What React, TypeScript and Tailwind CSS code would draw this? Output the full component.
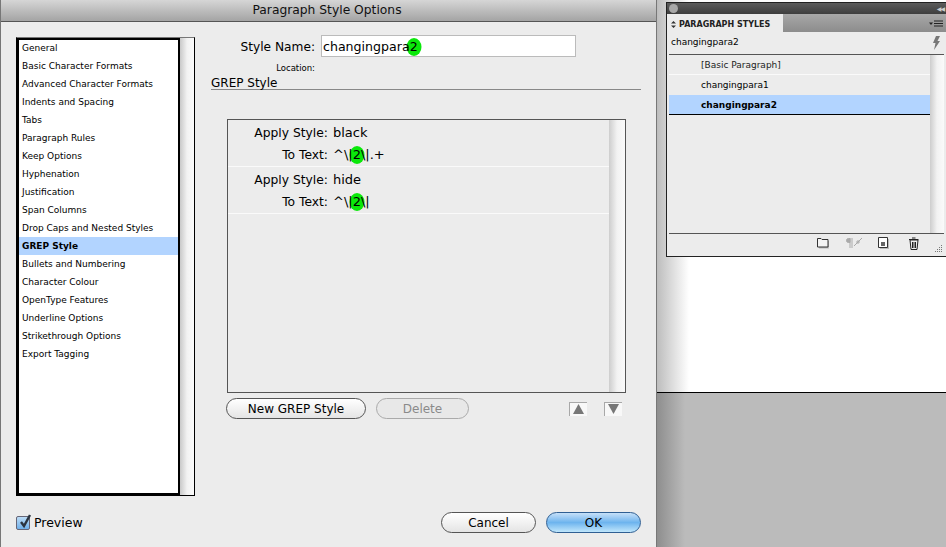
import React from 'react';

const categories = [
  'General',
  'Basic Character Formats',
  'Advanced Character Formats',
  'Indents and Spacing',
  'Tabs',
  'Paragraph Rules',
  'Keep Options',
  'Hyphenation',
  'Justification',
  'Span Columns',
  'Drop Caps and Nested Styles',
  'GREP Style',
  'Bullets and Numbering',
  'Character Colour',
  'OpenType Features',
  'Underline Options',
  'Strikethrough Options',
  'Export Tagging',
];

const Two: React.FC = () => (
  <span className="relative inline-block">
    <span className="absolute left-1/2 top-1/2 -z-10 h-[18px] w-[15px] -translate-x-1/2 -translate-y-1/2 rounded-[50%] bg-[#0ae80a]" />
    2
  </span>
);

const GrepRule: React.FC<{ style: string; tail?: string }> = ({ style, tail }) => (
  <div className="h-[47px] border-b border-[#fafafa] pt-[2px] text-[12.3px] leading-[22px]">
    <div className="flex">
      <span className="w-[100px] text-right">Apply Style:</span>
      <span className="ml-[5px] text-[13px]">{style}</span>
    </div>
    <div className="flex">
      <span className="w-[100px] text-right">To Text:</span>
      <span className="isolate ml-[5px] text-[13px]">
        ^\|<Two />\|{tail}
      </span>
    </div>
  </div>
);

const Pill: React.FC<{ label: string; className: string }> = ({ label, className }) => (
  <button className={`flex h-[21px] items-center justify-center rounded-full border text-[12px] ${className}`}>
    {label}
  </button>
);

const ArrowButton: React.FC<{ down?: boolean }> = ({ down }) => (
  <div className="flex h-[14px] w-[18px] items-center justify-center border-l border-t border-[#a8a8a8] bg-[#f8f8f8]">
    <svg width="11" height="10" viewBox="0 0 11 10">
      <path d={down ? 'M0 0h11L5.5 10z' : 'M5.5 0L11 10H0z'} fill="#777" />
    </svg>
  </div>
);

const CategoryList: React.FC = () => (
  <div className="flex h-[459px] w-[179px] border border-black border-t-[#777] bg-[#f4f4f4]">
    <div className="w-[163px] border-[2px] border-black bg-white">
      <div className="-mt-px">
        {categories.map((c) => (
          <div
            key={c}
            className={`h-[18px] pl-[3px] text-[9px] leading-[18px] ${c === 'GREP Style' ? 'bg-[#b2d4ff] font-bold' : ''}`}
          >
            {c}
          </div>
        ))}
      </div>
    </div>
    <div className="flex-1 bg-gradient-to-r from-[#c9c9c9] via-[#f2f2f2] to-[#fbfbfb]" />
  </div>
);

const Dialog: React.FC = () => (
  <div className="flex w-[657px] flex-col border-l border-r border-[#777] bg-[#ececec]">
    <div className="flex h-[22px] items-center justify-center border-b border-[#555] bg-gradient-to-b from-[#d6d6d6] to-[#a4a4a4] pr-[3px] text-[12.3px] text-[#111]">
      Paragraph Style Options
    </div>
    <div className="flex flex-1">
      <div className="ml-[15px] mt-[15px] flex w-[179px] flex-col">
        <CategoryList />
        <label className="mt-[18px] flex items-center gap-[3px] text-[12.5px]">
          <span className="relative flex h-[14px] w-[14px] items-center justify-center rounded-[2px] border border-[#667] bg-gradient-to-b from-[#bcdcf6] to-[#6fb0ea]">
            <svg className="absolute -top-[3px] left-[1px]" width="15" height="15" viewBox="0 0 15 15">
              <path d="M3 8l3 4 6-11" fill="none" stroke="#2b3440" strokeWidth="2.4" />
            </svg>
          </span>
          <span className="ml-[1px]">Preview</span>
        </label>
      </div>
      <div className="ml-[16px] flex w-[430px] flex-col">
        <div className="mt-[13px] flex items-center">
          <span className="w-[104px] pt-[2px] text-right text-[12.2px]">Style Name:</span>
          <div className="ml-[6px] h-[22px] w-[255px] border border-[#bbb] bg-white pl-[1px] text-[12.6px] leading-[21px]">
            <span className="isolate">
              changingpara
              <Two />
            </span>
          </div>
        </div>
        <div className="mt-[5px] w-[104px] text-right text-[8.5px] leading-[12px]">Location:</div>
        <div className="h-[16px] border-b border-[#888] pt-[1px] text-[12px] leading-[16px]">GREP Style</div>
        <div className="ml-[16px] mt-[29px] flex h-[274px] w-[399px] border border-[#555]">
          <div className="flex-1">
            <GrepRule style="black" tail=".+" />
            <GrepRule style="hide" />
          </div>
          <div className="w-[16px] bg-gradient-to-r from-[#cdcdcd] via-[#f2f2f2] to-[#fafafa]" />
        </div>
        <div className="ml-[15px] mt-[5px] flex items-center">
          <Pill
            label="New GREP Style"
            className="w-[140px] border-[#555] bg-gradient-to-b from-white via-[#f2f2f2] to-[#e4e4e4] text-black"
          />
          <Pill label="Delete" className="ml-[10px] w-[93px] border-[#aaa] bg-[#e8e8e8] text-[#8a8a8a]" />
          <div className="ml-auto mr-[19px] flex gap-[17px]">
            <ArrowButton />
            <ArrowButton down />
          </div>
        </div>
        <div className="mt-[93px] flex justify-end gap-[10px]">
          <Pill
            label="Cancel"
            className="w-[95px] border-[#555] bg-gradient-to-b from-white via-[#f2f2f2] to-[#e4e4e4] text-black"
          />
          <Pill
            label="OK"
            className="w-[95px] border-[#2f5f93] bg-gradient-to-b from-[#c6e0f8] via-[#6db4ee] to-[#bfe6fb] text-black"
          />
        </div>
      </div>
    </div>
  </div>
);

const StylesPanel: React.FC = () => (
  <div className="ml-[9px] mt-[2px] flex h-[255px] flex-col border-b border-l border-t border-[#222] bg-[#ececec]">
    <div className="flex h-[11px] items-center justify-between bg-gradient-to-b from-[#5c5c5c] to-[#3e3e3e] pl-[2px] pr-[2px]">
      <span className="h-[9px] w-[9px] rounded-full bg-[#a8a8a8]" />
      <span className="text-[6px] leading-none tracking-[-1px] text-[#ccc]">◀◀</span>
    </div>
    <div className="flex h-[18px] bg-gradient-to-b from-[#a8a8a8] to-[#8c8c8c]">
      <div className="flex w-[116px] items-center gap-[3px] bg-[#ececec] pl-[4px] pt-[3px] text-[8px] font-bold text-[#222]">
        <svg width="5" height="7" viewBox="0 0 5 7">
          <path d="M2.5 0L5 2.6H0zM2.5 7L0 4.4h5z" fill="#333" />
        </svg>
        PARAGRAPH STYLES
      </div>
      <div className="ml-auto flex items-center pr-[3px] pt-[2px]">
        <svg width="14" height="8" viewBox="0 0 14 8">
          <path d="M0 2.5h4L2 5z" fill="#222" />
          <path d="M5 1h9M5 3.5h9M5 6h9" stroke="#222" strokeWidth="1" />
        </svg>
      </div>
    </div>
    <div className="mx-[2px] flex h-[23px] items-center justify-between border-b border-[#555] pl-[2px] pr-[4px] text-[9px]">
      changingpara2
      <svg width="8" height="14" viewBox="0 0 8 14">
        <path d="M4 0h4L5.5 5H8L2 14l1.5-7H1z" fill="#777" />
      </svg>
    </div>
    <div className="mx-[2px] flex flex-1 border-b border-[#555]">
      <div className="flex-1 text-[9px]">
        <div className="h-[20px] border-b border-[#fafafa] pl-[32px] leading-[20px] text-[#222]">[Basic Paragraph]</div>
        <div className="h-[20px] pl-[32px] leading-[20px]">changingpara1</div>
        <div className="h-[20px] border-b border-black bg-[#b2d4ff] pl-[32px] font-bold leading-[20px]">changingpara2</div>
      </div>
      <div className="w-[14px] bg-gradient-to-r from-[#cdcdcd] via-[#f2f2f2] to-[#fafafa]" />
    </div>
    <div className="flex h-[22px] items-center justify-end pb-[4px] pr-[3px]">
      {/* footer icons: folder, style options, new style, trash, grip */}
      <svg width="13" height="12" viewBox="0 0 13 12">
        <path d="M2 4h10v7.5H2z" fill="#bbb" />
        <path d="M.5 1.5h3.5l1 1h6v7.5H.5z" fill="#f4f4f4" stroke="#333" />
      </svg>
      <svg className="ml-[15px]" width="18" height="12" viewBox="0 0 18 12">
        <path d="M5 1.5h-1.5a2 2 0 000 4H5zM5 1v10M7 1v10" stroke="#aaa" fill="#aaa" />
        <path d="M9 9l8-8M11 5h4M13 3v4" stroke="#aaa" />
      </svg>
      <svg className="ml-[15px]" width="11" height="12" viewBox="0 0 11 12">
        <path d="M2 2h9v10H2z" fill="#bbb" />
        <path d="M.5.5h9v10h-9z" fill="#fff" stroke="#333" />
        <path d="M3 5h4v4H3z" fill="#666" />
      </svg>
      <svg className="ml-[19px]" width="11" height="13" viewBox="0 0 11 13">
        <path d="M2 3h8l-1 9.5H3z" fill="#eee" stroke="#222" />
        <path d="M1 2.5h9.5M4 1h3.5" stroke="#222" />
        <path d="M4.5 5v6M6 5v6M7.5 5v6" stroke="#222" />
      </svg>
      <svg className="ml-[14px] mt-[12px]" width="10" height="10" viewBox="0 0 10 10">
        <path d="M8 1h1v1H8zM6 3h1v1H6zM8 3h1v1H8zM4 5h1v1H4zM6 5h1v1H6zM8 5h1v1H8zM2 7h1v1H2zM4 7h1v1H4zM6 7h1v1H6zM8 7h1v1H8z" fill="#777" />
      </svg>
    </div>
  </div>
);

export default function App() {
  return (
    <div className="flex h-[547px] w-[946px] overflow-hidden bg-[#ececec] font-['DejaVu_Sans',sans-serif] text-black">
      <Dialog />
      <div className="flex flex-1 flex-col">
        <div className="h-[393px] border-b border-black bg-[linear-gradient(to_right,#bdbdbd,#ffffff_32px)]">
          <StylesPanel />
        </div>
        <div className="flex-1 bg-[linear-gradient(to_right,#8e8e8e,#bbbbbb_28px)]" />
      </div>
    </div>
  );
}
